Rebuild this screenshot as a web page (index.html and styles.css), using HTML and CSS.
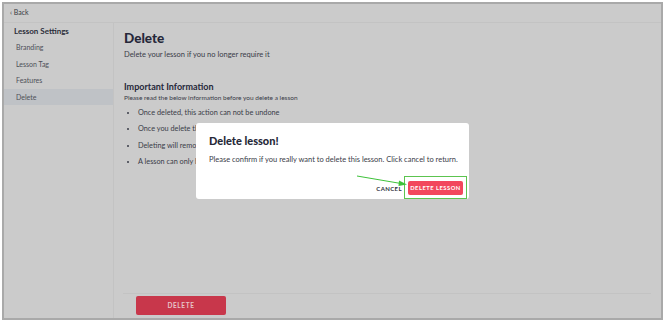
FILE: index.html
```html
<!DOCTYPE html>
<html>
<head>
<meta charset="utf-8">
<link rel="stylesheet" href="styles.css">
</head>
<body>
<div class="frame">
  <div class="topbar"><span class="back">&#8249; Back</span></div>
  <div class="body">
    <aside class="sidebar">
      <div class="side-title">Lesson Settings</div>
      <div class="side-item">Branding</div>
      <div class="side-item">Lesson Tag</div>
      <div class="side-item">Features</div>
      <div class="side-item active">Delete</div>
    </aside>
    <main class="main">
      <div class="content">
        <h1 class="title">Delete</h1>
        <p class="subtitle">Delete your lesson if you no longer require it</p>
        <h2 class="info-title">Important Information</h2>
        <p class="info-sub">Please read the below information before you delete a lesson</p>
        <ul class="bullets">
          <li>Once deleted, this action can not be undone</li>
          <li>Once you delete the lesson, all of its content will be lost</li>
          <li>Deleting will remove the lesson for all of your learners</li>
          <li>A lesson can only be deleted by its owner</li>
        </ul>
      </div>
      <div class="footer"><button class="delete-btn">DELETE</button></div>
    </main>
  </div>
  <div class="modal">
    <div class="modal-title">Delete lesson!</div>
    <div class="modal-text">Please confirm if you really want to delete this lesson. Click cancel to return.</div>
    <div class="modal-actions">
      <span class="cancel">CANCEL</span>
      <span class="highlight"><span class="confirm">DELETE LESSON</span></span>
    </div>
  </div>
  <svg class="arrow" width="60" height="16" viewBox="0 0 60 16">
    <line x1="2" y1="2" x2="46" y2="9.5" stroke="#3ec23a" stroke-width="1"/>
    <polygon points="52,10.5 44,6.5 43.5,12" fill="#3ec23a"/>
  </svg>
</div>
</body>
</html>
```
FILE: styles.css
```css
* { box-sizing: border-box; }
html, body { margin: 0; padding: 0; }
body {
  width: 670px; height: 322px; background: #ffffff;
  font-family: "Lato", "Liberation Sans", sans-serif;
  color: #2c2e3a;
}
.frame {
  position: relative;
  margin: 2px 0 0 2px;
  width: 661px; height: 318px;
  border: 2px solid #a9a9a9;
  background: #cbcbcb;
  display: flex; flex-direction: column;
  overflow: hidden;
}
.topbar {
  height: 19px;
  border-bottom: 1px solid #c3c3c3;
  padding: 4px 0 0 6px;
  font-size: 7px; color: #3a3c44;
}
.body { flex: 1; display: flex; }
.sidebar {
  width: 110px;
  border-right: 1px solid #c3c3c3;
  padding-top: 2px;
}
.side-title {
  font-size: 8px; font-weight: 700; color: #2c2e3a;
  padding-left: 10px; height: 14px; line-height: 12px;
}
.side-item {
  height: 16.5px; line-height: 16.5px;
  font-size: 7px; color: #4e5058;
  padding-left: 12px;
}
.side-item.active { background: #bfc2c6; }
.main { flex: 1; display: flex; flex-direction: column; }
.content { flex: 1; padding: 7px 0 0 10px; }
.title { margin: 0; font-size: 13.5px; font-weight: 900; line-height: 17px; color: #26283a; }
.subtitle { margin: 3px 0 0; font-size: 7.5px; color: #3a3c48; line-height: 10px; }
.info-title { margin: 21px 0 0; font-size: 9px; font-weight: 700; line-height: 12px; color: #26283a; }
.info-sub { margin: 0; font-size: 6.5px; color: #3a3c48; line-height: 9px; }
.bullets { margin: 6px 0 0; padding-left: 14px; font-size: 7.3px; color: #3a3c48; }
.bullets li { height: 16.4px; line-height: 10px; }
.footer {
  height: 25px;
  margin: 0 10px 0 9px;
  border-top: 1px solid #c3c3c3;
  padding: 2px 0 0 13px;
}
.delete-btn {
  display: block;
  width: 90px; height: 19px; padding: 0;
  border: none; border-radius: 2px;
  background: #c8374b; color: #e7c3c8;
  font-family: inherit; font-size: 6.5px; font-weight: 700; letter-spacing: 0.6px;
}
.modal {
  position: absolute; left: 192px; top: 119px;
  width: 273px; height: 76px;
  background: #ffffff; border-radius: 3px;
  padding: 11px 0 0 13px;
}
.modal-title { font-size: 11px; font-weight: 900; color: #262838; line-height: 14px; }
.modal-text { margin-top: 7px; font-size: 7.5px; color: #3a3c48; line-height: 10px; white-space: nowrap; }
.modal-actions {
  margin-top: 11px; display: flex; justify-content: flex-end; align-items: center;
  padding-right: 2px;
}
.cancel { font-size: 6px; font-weight: 700; letter-spacing: 0.4px; color: #2c2e3a; margin-right: 2px; margin-top: 2px; }
.highlight {
  border: 1.5px solid #5cc44f; padding: 4px 3px 3px;
}
.confirm {
  display: block;
  width: 55px; height: 14px; line-height: 14px; text-align: center;
  background: #f2475d; color: #ffffff; border-radius: 2px;
  font-size: 5.8px; font-weight: 700; letter-spacing: 0.5px;
}
.arrow { position: absolute; left: 351px; top: 170px; }
```
